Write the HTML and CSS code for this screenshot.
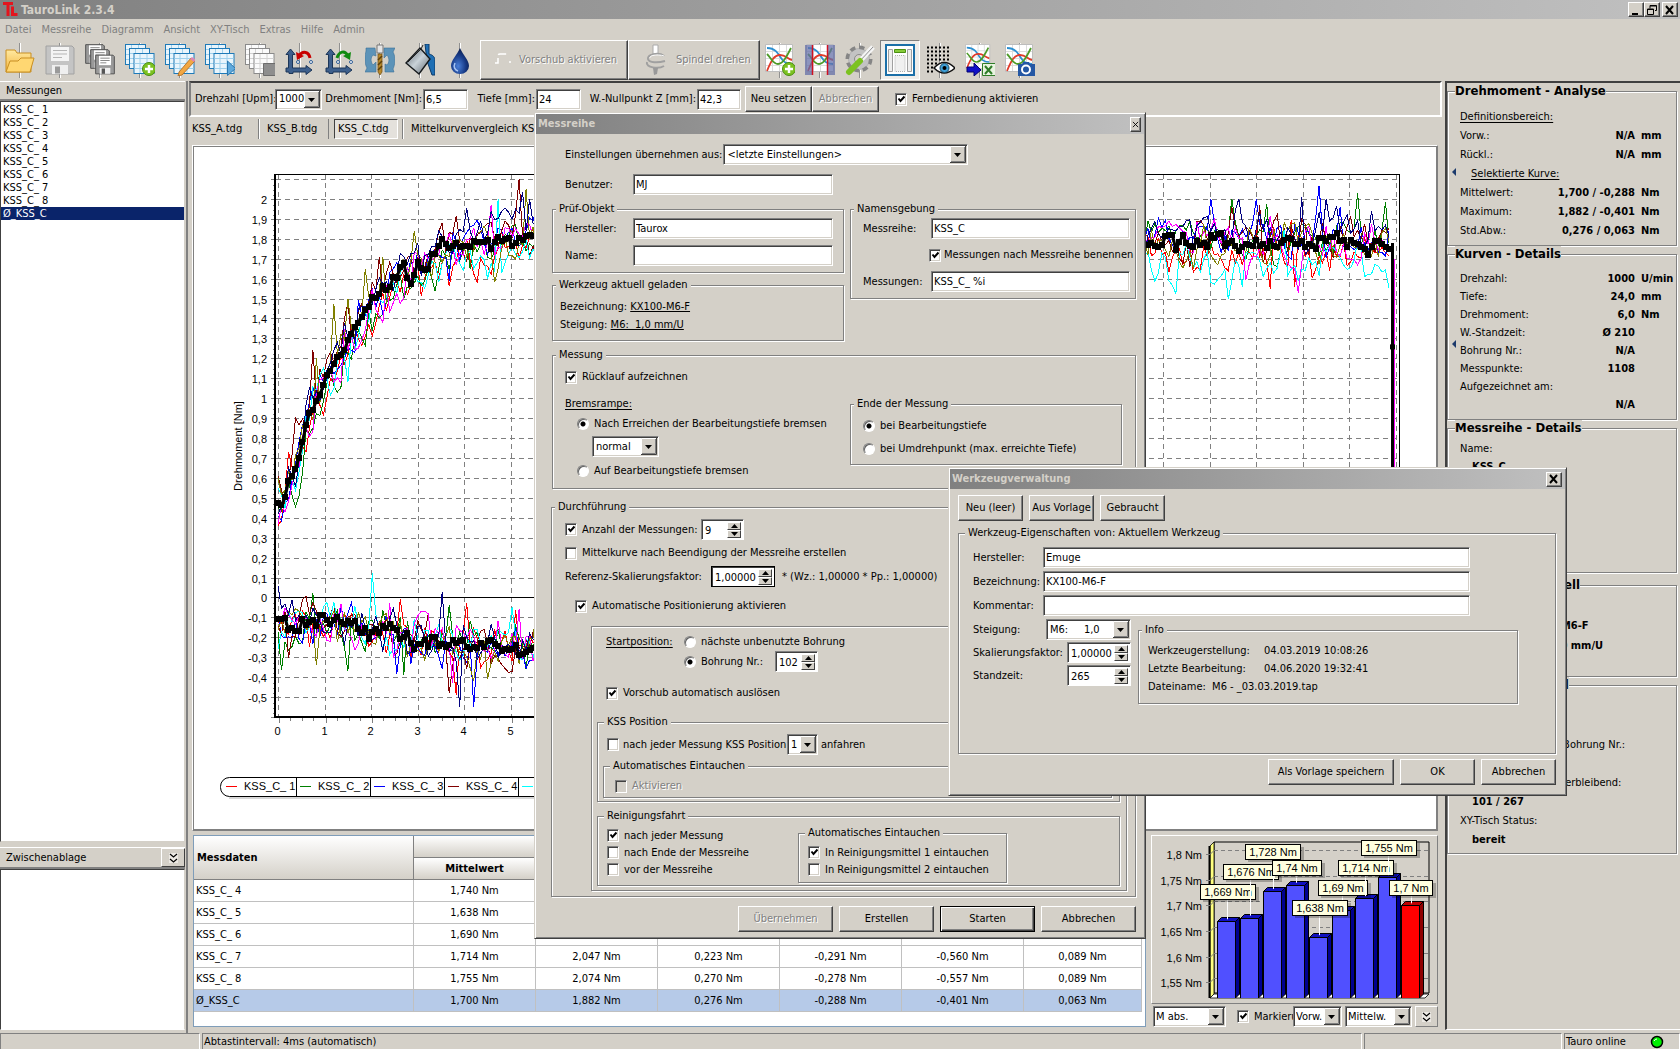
FILE: index.html
```html
<!DOCTYPE html>
<html lang="de">
<head>
<meta charset="utf-8">
<title>TauroLink 2.3.4</title>
<link rel="stylesheet" href="styles.css">
</head>
<body>
<svg class="defs" aria-hidden="true">
  <defs>
    <linearGradient id="gFolder" x1="0" y1="0" x2="0" y2="1"><stop offset="0" stop-color="#ffe9a0"/><stop offset="1" stop-color="#f2b33c"/></linearGradient>
    <linearGradient id="gBucket" x1="0" y1="0" x2="1" y2="1"><stop offset="0" stop-color="#555e66"/><stop offset=".5" stop-color="#c9d2d8"/><stop offset="1" stop-color="#59636b"/></linearGradient>
    <radialGradient id="gDrop" cx=".4" cy=".7" r=".7"><stop offset="0" stop-color="#4a7fd8"/><stop offset=".6" stop-color="#173a86"/><stop offset="1" stop-color="#0a1c4c"/></radialGradient>
    <symbol id="sheet" viewBox="0 0 21 21"><rect x=".5" y=".5" width="20" height="20" fill="#e9f5fc" stroke="#1e7ab8"/><path d="M1 5.500h19M1 10.500h19M1 15.500h19M6.500 1v19M13.500 1v19" stroke="#9fd0ec" fill="none"/></symbol>
    <symbol id="sheetGray" viewBox="0 0 21 21"><rect x=".5" y=".5" width="20" height="20" fill="#fbfbfb" stroke="#8a8a8a"/><path d="M1 5.500h19M1 10.500h19M1 15.500h19M6.500 1v19M13.500 1v19" stroke="#d2d2d2" fill="none"/></symbol>
    <symbol id="sheets" viewBox="0 0 30 32"><use href="#sheet" x="0" y="0" width="21" height="21"/><use href="#sheet" x="4" y="4" width="21" height="21"/><use href="#sheet" x="8" y="9" width="22" height="21"/></symbol>
    <symbol id="disk" viewBox="0 0 30 30"><path d="M1 1h26l2 2v26H1z" fill="#c4c4c4" stroke="#a2a2a2"/><path d="M6 2h18v14H6z" fill="#f4f4f4"/><path d="M8 5.500h14M8 9h14M8 12.500h9" stroke="#b5b5b5"/><path d="M7 20h16v9H7z" fill="#efefef"/><path d="M10 21.500h5v7h-5z" fill="#9a9a9a"/></symbol>
    <symbol id="diskDark" viewBox="0 0 30 30"><path d="M1 1h26l2 2v26H1z" fill="#9a9a9a" stroke="#555" stroke-width="1.500"/><path d="M6 2h18v14H6z" fill="#fff"/><path d="M8 5.500h14M8 9h14M8 12.500h9" stroke="#8a8a8a" stroke-width="1.500"/><path d="M7 20h16v9H7z" fill="#eee"/><path d="M10 21h5v8h-5z" fill="#555"/></symbol>
    <symbol id="curves" viewBox="0 0 30 30"><path d="M.5.500h27v27H.5z" fill="#fff" stroke="#bdbdbd"/><path d="M1 7.500h26M1 14.500h26M1 21.500h26M7.500 1v26M14.500 1v26M21.500 1v26" stroke="#dcdcdc"/><path d="M2 4c8 0 11 5 14 10s6 6 11 6" fill="none" stroke="#2c8fd0" stroke-width="1.800"/><path d="M2 27C6 17 9 11 15 11s7 4 12 5" fill="none" stroke="#e03b2a" stroke-width="1.800"/><path d="M2 10c5 5 6 10 11 10s9-8 13-16" fill="none" stroke="#4d9a27" stroke-width="1.800"/></symbol>
    <symbol id="plus" viewBox="0 0 14 14"><circle cx="7" cy="7" r="6.500" fill="#7cc220" stroke="#4a8c10"/><path d="M7 3v8M3 7h8" stroke="#fff" stroke-width="2.500"/></symbol>
    <symbol id="axes" viewBox="0 0 30 30"><path d="M5.500 4 10 9.500H7.500V23H21v-2.500L27 25l-6 4.500V27h-13v1.500h-4V27H1v-4h2.500V9.500H1z" fill="#3d5f8c" stroke="#1c3658"/></symbol>
    <symbol id="turn" viewBox="0 0 30 30"><path d="M10 3H1v3c-1 4-2 12 1 17l-2 4h11V17l-3 3c-3-4-2-8 0-10l3 1zM20 27h9l-1-3c2-4 3-12 0-17l2-4H19v10l3-3c3 4 2 8 0 10l-2-1z" fill="#5c93b8" stroke="#3a7098" stroke-width=".6"/><path d="M12 0h6v8h-6z" fill="#e4e4e4" stroke="#777"/><path d="M13 9h4v18l-2 3-2-3z" fill="#b98a2c" stroke="#6d4c10" stroke-width=".7"/><path d="m13 15 4-4m-4 9 4-4m-4 9 4-4" stroke="#5c3e0a" stroke-width="1.500"/></symbol>
    <symbol id="chevrons" viewBox="0 0 9 10"><path d="m1 1 3.500 3L8 1M1 6l3.500 3L8 6" fill="none" stroke="#000" stroke-width="1.200"/></symbol>
  </defs>
</svg>

<div class="app">
  <header class="titlebar">
    <svg class="logo" viewBox="0 0 15 15"><path d="M0 0h10v3H6.500v11h-3V3H0z" fill="#e3141d"/><path d="M8 4.500h3V11h3.500v3H8z" fill="#e3141d"/></svg>
    <h1>TauroLink 2.3.4</h1>
    <button class="wbtn" aria-label="Minimieren"><svg viewBox="0 0 12 12"><path d="M2 9h6v2H2z"/></svg></button>
    <button class="wbtn" aria-label="Wiederherstellen"><svg viewBox="0 0 12 12"><path d="M4 1.500h6.500v5H9M4 1.500v3M4 2h6.500M1.500 5h6v5.500h-6zM1.500 5.500h6" fill="none" stroke="#000"/></svg></button>
    <button class="wbtn wclose" aria-label="Schließen"><svg viewBox="0 0 12 12"><path d="m2 2 7 8M9 2l-7 8" stroke="#000" stroke-width="2"/></svg></button>
  </header>

  <nav class="menu">
    <a href="#">Datei</a><a href="#">Messreihe</a><a href="#">Diagramm</a><a href="#">Ansicht</a><a href="#">XY-Tisch</a><a href="#">Extras</a><a href="#">Hilfe</a><a href="#">Admin</a>
  </nav>

  <div class="toolbar">
    <button class="tool" aria-label="Öffnen"><svg viewBox="0 0 30 32"><path d="M1 6h9l2 3h14v19H1z" fill="url(#gFolder)" stroke="#c98f22"/><path d="m1 28 4-11h8l3-3h13l-4 14z" fill="#ffd772" stroke="#c98f22"/></svg></button>
    <button class="tool" aria-label="Speichern"><svg viewBox="0 0 30 32"><use href="#disk" x="0" y="1" width="30" height="30"/></svg></button>
    <button class="tool" aria-label="Alle speichern"><svg viewBox="0 0 30 32"><use href="#diskDark" x="0" y="0" width="20" height="20"/><use href="#diskDark" x="5" y="5" width="20" height="20"/><use href="#diskDark" x="10" y="10" width="20" height="21"/></svg></button>
    <button class="tool" aria-label="Neue Messreihe"><svg viewBox="0 0 30 32"><use href="#sheets" width="30" height="32"/><use href="#plus" x="17" y="18" width="14" height="14"/></svg></button>
    <button class="tool" aria-label="Messreihe bearbeiten"><svg viewBox="0 0 30 32"><use href="#sheets" width="30" height="32"/><path d="M26 14l4 3-13 14-4 1 1-4z" fill="#f2a742" stroke="#a8651a" stroke-width=".8"/><path d="m25 15 2-2 4 3-2 2z" fill="#dc86b4"/></svg></button>
    <button class="tool" aria-label="Messreihe starten"><svg viewBox="0 0 30 32"><use href="#sheets" width="30" height="32"/><path d="m22.500 17 8 7.500-8 7z" fill="#5fa9dc" stroke="#2b78b0"/></svg></button>
    <button class="tool" aria-label="Messreihe stoppen"><svg viewBox="0 0 30 32"><use href="#sheetGray" width="21" height="21"/><use href="#sheetGray" x="4" y="4" width="21" height="21"/><use href="#sheetGray" x="8" y="9" width="22" height="21"/><path d="M18.500 19.500h12v12h-12z" fill="#8e8e8e" stroke="#6c6c6c"/></svg></button>
    <button class="tool" aria-label="Achsen zurück"><svg viewBox="0 0 30 32"><use href="#axes" x="0" y="1" width="30" height="30"/><path d="M14 12c4-6 10-4 11 2" fill="none" stroke="#c80000" stroke-width="3"/><path d="m11 8 1 8 7-4z" fill="#c80000"/><circle cx="13" cy="18" r="1.500" fill="#fff" stroke="#2c5c94"/><circle cx="26" cy="18" r="1.500" fill="#fff" stroke="#2c5c94"/></svg></button>
    <button class="tool" aria-label="Achsen vor"><svg viewBox="0 0 30 32"><use href="#axes" x="0" y="1" width="30" height="30"/><path d="M12 14c2-7 8-8 11-2" fill="none" stroke="#108a10" stroke-width="3"/><path d="m26 8-1 8-7-4z" fill="#108a10"/><circle cx="13" cy="18" r="1.500" fill="#fff" stroke="#2c5c94"/><circle cx="26" cy="18" r="1.500" fill="#fff" stroke="#2c5c94"/></svg></button>
    <button class="tool" aria-label="Werkzeug wechseln"><svg viewBox="0 0 30 32"><use href="#turn" y="0" width="30" height="32"/></svg></button>
    <button class="tool" aria-label="Kühlschmierstoff"><svg viewBox="0 0 30 32"><path d="M20 0h4v10c4 1 6 3 6 7v14h-3l-5-14z" fill="#1f6fb4" stroke="#0c3a68"/><path d="m1 19 14-15 10 11-11 15z" fill="url(#gBucket)" stroke="#15191c" stroke-width="1.400"/><path d="M3 18 16 5l2-4" fill="none" stroke="#222"/></svg></button>
    <button class="tool" aria-label="Tropfen"><svg viewBox="0 0 30 32"><path d="M15 4c3 7 9 12 9 18a9 8 0 0 1-18 0C6 16 12 11 15 4z" fill="url(#gDrop)"/><path d="M10 19c-2 4 0 7 3 8" fill="none" stroke="#a9c6f4" stroke-width="1.500"/></svg></button>
    <button class="bigtool b1" disabled><svg viewBox="0 0 24 32"><path d="M3 19h3V12q0-2 2-2h8M17 18h2" fill="none" stroke="#fff" stroke-width="1.500" stroke-dasharray="8 3"/></svg>Vorschub aktivieren</button>
    <button class="bigtool b2" disabled><svg viewBox="0 0 24 32"><path d="M9 1h5v9H9z" fill="#fff" stroke="#aaa"/><path d="M20 12c-5-4-17-2-16 3 1 4 10 4 17 2M3 18c-2 6 12 7 17 4" fill="none" stroke="#a0a0a0" stroke-width="2"/><path d="M20 12c-5-2-15-1-14 2" fill="none" stroke="#fff"/><path d="M9 24h5l-1 6-3 1z" fill="#999"/></svg>Spindel drehen</button>
    <button class="tool" aria-label="Kurve hinzufügen"><svg viewBox="0 0 30 32"><use href="#curves" width="30" height="30"/><use href="#plus" x="17" y="18" width="14" height="14"/></svg></button>
    <button class="tool" aria-label="Bereich"><svg viewBox="0 0 30 32"><use href="#curves" x="1" width="30" height="30"/><path d="M0 1h7v30H0zM23 1h7v30h-7z" fill="#6670a8" fill-opacity=".75"/><path d="M7.500 1v30M22.500 1v30" stroke="#d01020" stroke-width="1.500"/></svg></button>
    <button class="tool" aria-label="Einstellungen"><svg viewBox="0 0 30 32"><circle cx="14" cy="15" r="11" fill="#b6b6b6" stroke="#858585" stroke-dasharray="5 3.600" stroke-width="5"/><circle cx="14" cy="15" r="10" fill="#c3c3c3"/><circle cx="14" cy="15" r="4.500" fill="#d4d0c8" stroke="#8a8a8a"/><path d="M28 3 14 18" stroke="#f4f4f4" stroke-width="5"/><path d="M28 3 14 18" stroke="#909090"/><path d="M15 17 4 28" stroke="#7cc220" stroke-width="6" stroke-linecap="round"/></svg></button>
    <button class="tool pressed" aria-label="Seitenleisten"><svg viewBox="0 0 30 32"><path d="M1 1h28v30H1z" fill="#fff" stroke="#1b6fa8" stroke-width="2"/><path d="M3.500 5.500h4v22h-4zM22.500 5.500h4v22h-4z" fill="#eee" stroke="#a0a0a0"/><path d="M10 11.500h10v16H10z" fill="#f0f0f0" stroke="#b0b0b0" stroke-dasharray="1 1"/><path d="M9.500 5.500h11v3h-11z" fill="#86cc3a" stroke="#4b8f12"/></svg></button>
    <button class="tool" aria-label="Raster"><svg viewBox="0 0 30 32"><path d="M2 3.500h24M2 7.500h24M2 11.500h24M2 15.500h24M2 19.500h10M2 23.500h8M2 27.500h8" stroke="#000" stroke-width="2" stroke-dasharray="2 2"/><path d="M9 24q10-11 21 0-11 10-21 0z" fill="#fff" stroke="#111" stroke-width="1.500"/><circle cx="19.500" cy="24" r="4.500" fill="#3fa0d8" stroke="#17465f"/><circle cx="19.500" cy="24" r="2"/></svg></button>
    <button class="tool" aria-label="Excel-Export"><svg viewBox="0 0 30 32"><use href="#curves" width="27" height="27"/><path d="M2 23h7v-4l7 7-7 6v-4H2z" fill="#1010c8" stroke="#000070"/><path d="M17.500 19.500h13v12h-13z" fill="#e8f4e0" stroke="#2f7d28"/><path d="m20 22 7 8m0-8-7 8" stroke="#2f7d28" stroke-width="2"/></svg></button>
    <button class="tool" aria-label="Bildschirmfoto"><svg viewBox="0 0 30 32"><use href="#curves" width="30" height="30"/><path d="M13 20h4l1-2h6l1 2h5v12H13z" fill="#2457a4"/><circle cx="21" cy="25.500" r="4" fill="#2457a4" stroke="#fff" stroke-width="2"/></svg></button>
  </div>

  <main class="main">
    <aside class="left">
      <h2 class="lhead">Messungen</h2>
      <ul class="runs">
        <li>KSS_C_ 1</li><li>KSS_C_ 2</li><li>KSS_C_ 3</li><li>KSS_C_ 4</li><li>KSS_C_ 5</li><li>KSS_C_ 6</li><li>KSS_C_ 7</li><li>KSS_C_ 8</li><li class="sel">Ø_KSS_C</li>
      </ul>
      <h2 class="lhead clip">Zwischenablage<button class="mini" aria-label="Ausklappen"><svg viewBox="0 0 9 10"><use href="#chevrons"/></svg></button></h2>
      <div class="clipbox"></div>
    </aside>

    <section class="center">
      <div class="remote">
        <label for="rpm">Drehzahl [Upm]:</label><select id="rpm"><option>1000</option></select>
        <label for="trq">Drehmoment [Nm]:</label><input id="trq" value="6,5">
        <label for="dep">Tiefe [mm]:</label><input id="dep" value="24">
        <label for="zero">W.-Nullpunkt Z [mm]:</label><input id="zero" value="42,3">
        <span class="pair"><button class="btn">Neu setzen</button><button class="btn" disabled>Abbrechen</button></span>
        <label class="check"><input type="checkbox" checked>Fernbedienung aktivieren</label>
      </div>
      <div class="tabs">
        <button>KSS_A.tdg</button><button>KSS_B.tdg</button><button class="on">KSS_C.tdg</button><button>Mittelkurvenvergleich KSS</button>
      </div>
      <div class="chart"><svg id="plot" role="img" aria-label="Drehmoment über Tiefe"></svg></div>
      <div class="bottom">
        <div class="tablewrap">
          <table>
            <colgroup><col class="c0"><col class="cv"><col class="cv"><col class="cv"><col class="cv"><col class="cv"><col></colgroup>
            <thead>
              <tr><th rowspan="2" class="first">Messdaten</th><th colspan="6"></th></tr>
              <tr><th>Mittelwert</th><th></th><th></th><th></th><th></th><th></th></tr>
            </thead>
            <tbody>
              <tr><td>KSS_C_ 4</td><td>1,740 Nm</td><td></td><td></td><td></td><td></td><td></td></tr>
              <tr><td>KSS_C_ 5</td><td>1,638 Nm</td><td></td><td></td><td></td><td></td><td></td></tr>
              <tr><td>KSS_C_ 6</td><td>1,690 Nm</td><td></td><td></td><td></td><td></td><td></td></tr>
              <tr><td>KSS_C_ 7</td><td>1,714 Nm</td><td>2,047 Nm</td><td>0,223 Nm</td><td>-0,291 Nm</td><td>-0,560 Nm</td><td>0,089 Nm</td></tr>
              <tr><td>KSS_C_ 8</td><td>1,755 Nm</td><td>2,074 Nm</td><td>0,270 Nm</td><td>-0,278 Nm</td><td>-0,557 Nm</td><td>0,089 Nm</td></tr>
              <tr class="mean"><td>Ø_KSS_C</td><td>1,700 Nm</td><td>1,882 Nm</td><td>0,276 Nm</td><td>-0,288 Nm</td><td>-0,401 Nm</td><td>0,063 Nm</td></tr>
            </tbody>
          </table>
        </div>
        <div class="barcol">
          <div class="barpanel"><svg id="bars" viewBox="0 0 285 167" role="img" aria-label="Mittelwerte"></svg></div>
          <div class="barctl">
            <select class="w73" aria-label="Größe"><option>M abs.</option></select>
            <label class="check mark"><input type="checkbox" checked>Markieru</label>
            <select class="w49" aria-label="Richtung"><option>Vorw.</option></select>
            <select class="w67" aria-label="Kennwert"><option>Mittelw.</option></select>
            <button class="mini flat" aria-label="Mehr"><svg viewBox="0 0 9 10"><use href="#chevrons"/></svg></button>
          </div>
        </div>
      </div>
    </section>

    <aside class="right">
      <fieldset class="info g1"><legend>Drehmoment - Analyse</legend>
        <p class="u">Definitionsbereich:</p>
        <p>Vorw.:<b>N/A</b><i>mm</i></p>
        <p>Rückl.:<b>N/A</b><i>mm</i></p>
        <p class="u sub">Selektierte Kurve:</p>
        <p>Mittelwert:<b>1,700 / -0,288</b><i>Nm</i></p>
        <p>Maximum:<b>1,882 / -0,401</b><i>Nm</i></p>
        <p>Std.Abw.:<b>0,276 / 0,063</b><i>Nm</i></p>
      </fieldset>
      <fieldset class="info g2"><legend>Kurven - Details</legend>
        <p>Drehzahl:<b>1000</b><i>U/min</i></p>
        <p>Tiefe:<b>24,0</b><i>mm</i></p>
        <p>Drehmoment:<b>6,0</b><i>Nm</i></p>
        <p>W.-Standzeit:<b>Ø 210</b><i></i></p>
        <p>Bohrung Nr.:<b>N/A</b><i></i></p>
        <p>Messpunkte:<b>1108</b><i></i></p>
        <p>Aufgezeichnet am:</p>
        <p><b>N/A</b><i></i></p>
      </fieldset>
      <fieldset class="info g3"><legend>Messreihe - Details</legend>
        <p>Name:</p>
        <p class="val">KSS_C</p>
      </fieldset>
      <fieldset class="info g4"><legend>Werkzeug - Aktuell</legend>
        <p class="val">Emuge - KX100-M6-F</p>
        <p class="val">Steigung M6: 1,0 mm/U</p>
      </fieldset>
      <fieldset class="info g5"><legend>Bohrplatte Detail</legend>
        <p>Nächste unbenutzte Bohrung Nr.:</p>
        <p></p>
        <p>Bohrungen – davon verbleibend:</p>
        <p class="val">101 / 267</p>
        <p>XY-Tisch Status:</p>
        <p class="val">bereit</p>
      </fieldset>
    </aside>
  </main>

  <footer class="status">
    <span></span><span>Abtastintervall: 4ms (automatisch)</span><span></span><span>Tauro online<svg viewBox="0 0 14 14"><circle cx="7" cy="7" r="5.500" fill="#00f000" stroke="#000" stroke-width="1.500"/><path d="M4 6q1-2 3-2" stroke="#fff" fill="none"/></svg></span>
  </footer>
</div>

<section class="window dlg1" role="dialog" aria-label="Messreihe">
  <header class="wtitle">Messreihe<button class="wbtn small" aria-label="Schließen"><svg viewBox="0 0 8 8"><path d="m1 1 6 6M7 1 1 7" stroke="#000"/></svg></button></header>
  <div class="body1">
    <div class="line top1"><label for="src">Einstellungen übernehmen aus:</label><select id="src"><option>&lt;letzte Einstellungen&gt;</option></select></div>
    <div class="line top2"><label for="usr">Benutzer:</label><input id="usr" value="MJ"></div>
    <div class="cols">
      <div class="colL">
        <fieldset class="box po"><legend>Prüf-Objekt</legend>
          <div class="line"><label for="mk">Hersteller:</label><input id="mk" value="Taurox"></div>
          <div class="line"><label for="nm">Name:</label><input id="nm" value=""></div>
        </fieldset>
        <fieldset class="box wz"><legend>Werkzeug aktuell geladen</legend>
          <p>Bezeichnung: <u>KX100-M6-F</u></p>
          <p>Steigung: <u>M6:&nbsp; 1,0 mm/U</u></p>
        </fieldset>
      </div>
      <fieldset class="box ng"><legend>Namensgebung</legend>
        <div class="line"><label for="mr">Messreihe:</label><input id="mr" value="KSS_C"></div>
        <label class="check h32"><input type="checkbox" checked>Messungen nach Messreihe benennen</label>
        <div class="line"><label for="ms">Messungen:</label><input id="ms" value="KSS_C_ %i"></div>
      </fieldset>
    </div>

    <fieldset class="box me"><legend>Messung</legend>
      <div class="meL">
        <label class="check h18"><input type="checkbox" checked>Rücklauf aufzeichnen</label>
        <p class="u brems">Bremsrampe:</p>
        <label class="check h18 in12"><input type="radio" name="br" checked>Nach Erreichen der Bearbeitungstiefe bremsen</label>
        <select class="ramp" aria-label="Bremsrampe"><option>normal</option></select>
        <label class="check h18 in12"><input type="radio" name="br">Auf Bearbeitungstiefe bremsen</label>
      </div>
      <fieldset class="box ende"><legend>Ende der Messung</legend>
        <label class="check h18"><input type="radio" name="en" checked>bei Bearbeitungstiefe</label>
        <label class="check h18"><input type="radio" name="en">bei Umdrehpunkt (max. erreichte Tiefe)</label>
      </fieldset>
    </fieldset>

    <fieldset class="box df"><legend>Durchführung</legend>
      <div class="line"><label class="check anz"><input type="checkbox" checked>Anzahl der Messungen:</label><span class="spin w42"><input value="9" aria-label="Anzahl"><button class="up" aria-label="Mehr"></button><button class="dn" aria-label="Weniger"></button></span></div>
      <label class="check h18 mk"><input type="checkbox">Mittelkurve nach Beendigung der Messreihe erstellen</label>
      <div class="line ref"><label for="rf">Referenz-Skalierungsfaktor:</label><span class="spin w64 focus"><input id="rf" value="1,00000"><button class="up" aria-label="Mehr"></button><button class="dn" aria-label="Weniger"></button></span><span>* (Wz.: 1,00000 * Pp.: 1,00000)</span></div>
      <label class="check h18 auto"><input type="checkbox" checked>Automatische Positionierung aktivieren</label>
      <div class="pos">
        <div class="start">
          <span class="u">Startposition:</span>
          <label class="check"><input type="radio" name="st">nächste unbenutzte Bohrung</label>
          <label class="check bn"><input type="radio" name="st" checked>Bohrung Nr.:</label>
          <span class="spin w42"><input value="102" aria-label="Bohrung Nr."><button class="up" aria-label="Mehr"></button><button class="dn" aria-label="Weniger"></button></span>
        </div>
        <label class="check h18 vs"><input type="checkbox" checked>Vorschub automatisch auslösen</label>
        <fieldset class="box kss"><legend>KSS Position</legend>
          <div class="line"><label class="check"><input type="checkbox">nach jeder Messung KSS Position</label><select aria-label="KSS Position"><option>1</option></select><span>anfahren</span></div>
          <fieldset class="box ae"><legend>Automatisches Eintauchen</legend>
            <label class="check h18 off"><input type="checkbox" disabled>Aktivieren</label>
          </fieldset>
        </fieldset>
        <fieldset class="box rf"><legend>Reinigungsfahrt</legend>
          <div class="stack">
            <label class="check"><input type="checkbox" checked>nach jeder Messung</label>
            <label class="check"><input type="checkbox">nach Ende der Messreihe</label>
            <label class="check"><input type="checkbox">vor der Messreihe</label>
          </div>
          <fieldset class="box ae2"><legend>Automatisches Eintauchen</legend>
            <label class="check"><input type="checkbox" checked>In Reinigungsmittel 1 eintauchen</label>
            <label class="check"><input type="checkbox">In Reinigungsmittel 2 eintauchen</label>
          </fieldset>
        </fieldset>
      </div>
    </fieldset>
    <div class="foot1"><button class="btn" disabled>Übernehmen</button><button class="btn">Erstellen</button><button class="btn def">Starten</button><button class="btn">Abbrechen</button></div>
  </div>
</section>

<section class="window dlg2" role="dialog" aria-label="Werkzeugverwaltung">
  <header class="wtitle">Werkzeugverwaltung<button class="wbtn" aria-label="Schließen"><svg viewBox="0 0 12 12"><path d="m2 2 7 8M9 2l-7 8" stroke="#000" stroke-width="2"/></svg></button></header>
  <div class="body2">
    <div class="bar2"><button class="btn">Neu (leer)</button><button class="btn">Aus Vorlage</button><button class="btn">Gebraucht</button></div>
    <fieldset class="box props"><legend>Werkzeug-Eigenschaften von: Aktuellem Werkzeug</legend>
      <div class="line wide"><label for="t1">Hersteller:</label><input id="t1" value="Emuge"></div>
      <div class="line wide"><label for="t2">Bezeichnung:</label><input id="t2" value="KX100-M6-F"></div>
      <div class="line wide"><label for="t3">Kommentar:</label><input id="t3" value=""></div>
      <div class="lower">
        <div class="nums">
          <div class="line"><label for="t4">Steigung:</label><select id="t4"><option>M6:&nbsp;&nbsp;&nbsp;&nbsp; 1,0</option></select></div>
          <div class="line"><label for="t5">Skalierungsfaktor:</label><span class="spin w64"><input id="t5" value="1,00000"><button class="up" aria-label="Mehr"></button><button class="dn" aria-label="Weniger"></button></span></div>
          <div class="line"><label for="t6">Standzeit:</label><span class="spin w64"><input id="t6" value="265"><button class="up" aria-label="Mehr"></button><button class="dn" aria-label="Weniger"></button></span></div>
        </div>
        <fieldset class="box inf"><legend>Info</legend>
          <p><span>Werkzeugerstellung:</span>04.03.2019 10:08:26</p>
          <p><span>Letzte Bearbeitung:</span>04.06.2020 19:32:41</p>
          <p>Dateiname:&nbsp; M6 - _03.03.2019.tap</p>
        </fieldset>
      </div>
    </fieldset>
    <div class="foot2"><button class="btn big">Als Vorlage speichern</button><button class="btn">OK</button><button class="btn">Abbrechen</button></div>
  </div>
</section>
<script src="charts.js"></script>
</body>
</html>
```
FILE: styles.css
```css
* { box-sizing: border-box; }
body {
  margin: 0;
  background: #d4d0c8;
  color: #000;
  font: 11px/14px "DejaVu Sans Condensed", "DejaVu Sans", sans-serif;
  overflow: hidden;
}
.defs { position: absolute; width: 0; height: 0; }
h1, h2, p, ul, fieldset { margin: 0; padding: 0; }
ul { list-style: none; }
button, input, select { font: inherit; color: inherit; margin: 0; border-radius: 0; }
label, p, legend, th, td, li, a, span, button { white-space: nowrap; }

/* shared controls */
input:not([type]), select {
  appearance: none;
  height: 21px;
  padding: 0 2px;
  border: 1px solid;
  border-color: #808080 #fff #fff #808080;
  box-shadow: inset 1px 1px #404040, inset -1px -1px #d4d0c8;
  background: #fff;
  outline: 0;
  min-width: 0;
}
select {
  padding-left: 3px;
  background: #fff url("data:image/svg+xml,%3Csvg xmlns='http://www.w3.org/2000/svg' width='16' height='17'%3E%3Cpath fill='%23d4d0c8' d='M0 0h16v17H0z'/%3E%3Cpath d='M.5 16V.5H15' fill='none' stroke='%23fff'/%3E%3Cpath d='M0 16.500h15.500V0' fill='none' stroke='%23404040'/%3E%3Cpath d='M1 15.500h13.500V1' fill='none' stroke='%23808080'/%3E%3Cpath d='M4 7h7l-3.500 4z'/%3E%3C/svg%3E") no-repeat right 1px top 1px;
}
.btn {
  height: 26px;
  padding: 0;
  background: #d4d0c8;
  border: 1px solid;
  border-color: #fff #404040 #404040 #fff;
  box-shadow: inset -1px -1px #808080;
  text-align: center;
}
.btn:disabled, .off { color: #808080; text-shadow: 1px 1px #fff; }
.btn.def { border-color: #000; box-shadow: inset 1px 1px #fff, inset -1px -1px #404040, inset -2px -2px #808080; }
.check { display: flex; align-items: center; gap: 5px; }
.check input {
  appearance: none;
  flex: none;
  width: 12px;
  height: 13px;
  border: 1px solid;
  border-color: #808080 #fff #fff #808080;
  box-shadow: inset 1px 1px #404040, inset -1px -1px #d4d0c8;
  background: #fff;
}
.check input[type=checkbox]:checked {
  background: #fff url("data:image/svg+xml,%3Csvg xmlns='http://www.w3.org/2000/svg' width='10' height='11'%3E%3Cpath d='M2.500 4.500 4.500 7l4-4.500' fill='none' stroke='%23000' stroke-width='2'/%3E%3C/svg%3E") no-repeat;
}
.check input:disabled { background: #d4d0c8; }
.check input[type=radio] { border-radius: 50%; height: 12px; box-shadow: inset 1px 1px #606060; }
.check input[type=radio]:checked { background: radial-gradient(circle at 5px 5px, #000 2px, #fff 3px); }
.spin {
  display: grid;
  grid-template: 8px 8px / 1fr 14px;
  height: 21px;
  padding: 2px;
  border: 1px solid;
  border-color: #808080 #fff #fff #808080;
  box-shadow: inset 1px 1px #404040;
  background: #fff;
}
.spin input:not([type]) { grid-row: 1 / 3; height: 17px; width: 100%; border: 0; box-shadow: none; padding: 0 0 0 1px; background: none; }
.spin button {
  padding: 0;
  border: 1px solid;
  border-color: #fff #404040 #404040 #fff;
  background: #d4d0c8 url("data:image/svg+xml,%3Csvg xmlns='http://www.w3.org/2000/svg' width='7' height='4'%3E%3Cpath d='M0 4h7L3.500 0z'/%3E%3C/svg%3E") no-repeat center;
}
.spin .dn { background-image: url("data:image/svg+xml,%3Csvg xmlns='http://www.w3.org/2000/svg' width='7' height='4'%3E%3Cpath d='M0 0h7L3.500 4z'/%3E%3C/svg%3E"); }
.spin.focus { border-color: #000; }
.w42 { width: 43px; }
.w64 { width: 64px; }
.line { display: flex; align-items: center; }
.u { text-decoration: underline; text-underline-offset: 2px; }
.h18 { height: 18px; }
.h32 { height: 32px; }
.box {
  --inset: 12px;
  --legend: 3px;
  position: relative;
  border: 1px solid #808080;
  box-shadow: 1px 1px #fff, inset 1px 1px #fff;
  min-width: 0;
}
.box > legend { margin-left: calc(var(--legend) - var(--inset)); padding: 0 3px; background: #d4d0c8; }

/* main window */
.app { display: flex; flex-direction: column; height: 100vh; }
.titlebar {
  display: flex;
  align-items: center;
  height: 19px;
  padding: 0 2px 0 3px;
  background: linear-gradient(90deg, #808080, #c0c0c0);
}
.logo { width: 15px; height: 15px; }
h1 { flex: 1; padding-left: 3px; font-size: 12px; line-height: 18px; color: #d4d0c8; }
.wbtn {
  width: 16px;
  height: 15px;
  padding: 0;
  display: grid;
  place-items: center;
  background: #d4d0c8;
  border: 1px solid;
  border-color: #fff #404040 #404040 #fff;
  box-shadow: inset -1px -1px #808080;
}
.wbtn svg { width: 12px; height: 12px; }
.wclose { margin-left: 2px; }
.menu { display: flex; gap: 10px; height: 21px; padding-left: 5px; align-items: center; }
.menu a { color: #808080; text-decoration: none; }
.toolbar { display: flex; height: 41px; padding-bottom: 1px; }
.tool {
  flex: none;
  width: 40px;
  padding: 0;
  border: 0;
  display: grid;
  place-items: center;
  background: linear-gradient(90deg, transparent 19px, #909090 19px, #909090 20px, #fff 20px, #fff 21px, transparent 21px) no-repeat 0 3px / 40px 35px;
}
.tool svg { width: 30px; height: 32px; }
.tool.pressed {
  border: 1px solid;
  border-color: #808080 #fff #fff #808080;
  background: #efedea;
}
.bigtool {
  display: flex;
  align-items: center;
  padding: 0;
  background: #d4d0c8;
  border: 1px solid;
  border-color: #fff #404040 #404040 #fff;
  box-shadow: inset -1px -1px #808080;
  color: #808080;
  text-shadow: 1px 1px #fff;
}
.bigtool svg { width: 24px; height: 32px; }
.b1 { width: 148px; padding-left: 11px; gap: 3px; }
.b2 { width: 132px; padding-left: 15px; gap: 8px; }
.main { flex: 1; min-height: 0; display: grid; grid-template-columns: 188px minmax(0, 1fr) 235px; }

/* left column */
.left { display: flex; flex-direction: column; border-right: 2px solid #808080; padding-right: 1px; }
.lhead {
  display: flex;
  align-items: center;
  justify-content: space-between;
  height: 20px;
  padding-left: 6px;
  font-size: 11px;
  font-weight: normal;
  border-top: 1px solid #fff;
  border-bottom: 2px solid #808080;
  flex: none;
}
.runs { flex: 1; background: #fff; border: 1px solid #404040; border-right-color: #d4d0c8; border-bottom-color: #d4d0c8; padding-top: 1px; }
.runs li { height: 13px; line-height: 13px; padding-left: 2px; }
.runs .sel { background: #0a246a; color: #fff; }
.clip { margin-top: 5px; height: 22px; }
.mini {
  width: 24px;
  height: 19px;
  display: grid;
  place-items: center;
  padding: 0;
  background: #d4d0c8;
  border: 1px solid;
  border-color: #fff #404040 #404040 #fff;
}
.mini svg { width: 9px; height: 10px; background: #ece9e4; }
.clipbox { height: 161px; background: #fff; border: 1px solid #404040; border-right-color: #d4d0c8; border-bottom-color: #fff; margin-bottom: 3px; }

/* centre column */
.center { display: flex; flex-direction: column; padding: 0 7px 3px 1px; min-width: 0; }
.remote {
  display: grid;
  grid-template-columns: 80px 47px 101px 45px 68px 45px 116px 44px 138px auto;
  align-items: center;
  height: 36px;
  padding-left: 4px;
  border: 2px solid #808080;
  border-top-color: #404040;
  border-right-color: #fff;
  border-bottom-color: #fff;
  margin-right: -4px;
}
.remote > label { text-align: right; padding-right: 1px; }
.pair { display: flex; margin-left: 4px; margin-bottom: 1px; }
.pair .btn { width: 69px; }
.remote .check { margin-left: 16px; justify-content: start; }
.tabs { display: flex; align-items: center; height: 28px; padding: 1px 0 5px; }
.tabs button { height: 20px; padding: 0 7px 0 7px; border: 0; background: none; border-left: 1px solid #fff; box-shadow: -1px 0 #808080; text-align: left; overflow: hidden; }
.tabs button:first-child { width: 70px; border: 0; box-shadow: none; padding-left: 3px; }
.tabs button:nth-child(2) { width: 71px; }
.tabs .on { width: 64px; margin: 0 5px 0 4px; padding: 0 3px; border: 1px solid; border-color: #404040 #fff #fff #404040; background: #e4e1dc; box-shadow: -5px 0 #d4d0c8, -6px 0 #808080; }
.chart {
  flex: 1;
  min-height: 0;
  margin-left: 3px;
  background: #fff;
  border: 1px solid;
  border-color: #fff #808080 #808080 #fff;
  box-shadow: inset 1px 1px #808080, inset -1px -1px #808080;
}
.chart svg { display: block; width: 100%; height: 100%; }
svg text { font: 11px "Liberation Sans", Arial, sans-serif; }
.bottom { display: flex; gap: 5px; height: 192px; margin: 4px 0 3px 4px; }
.tablewrap { flex: 1; min-width: 0; background: #fff; border: 1px solid #7f9db9; padding-right: 3px; overflow: hidden; }
table { width: 100%; border-collapse: separate; border-spacing: 0; table-layout: fixed; }
.c0 { width: 220px; }
.cv { width: 122px; }
th { height: 22px; padding: 0; background: linear-gradient(#fff, #d4d0c8); border-right: 1px solid #808080; border-bottom: 1px solid #808080; }
th.first { text-align: left; padding: 0 3px; font-size: 11px; }
td { height: 22px; padding: 0; border-right: 1px solid #c0c0c0; border-bottom: 1px solid #c0c0c0; text-align: center; }
td:first-child { text-align: left; padding-left: 2px; }
.mean td { background: #b6cae8; }
.barcol { width: 287px; display: flex; flex-direction: column; gap: 2px; }
.barpanel { height: 169px; border: 1px solid; border-color: #fff #808080 #808080 #fff; }
.barpanel svg { display: block; width: 285px; height: 167px; }
.barctl { display: flex; gap: 3px; padding-left: 2px; }
.barctl select { flex: none; padding-left: 2px; }
.w73 { width: 73px; }
.w49 { width: 49px; }
.w67 { width: 67px; }
.mark { width: 56px; margin: 0 -3px 0 8px; overflow: hidden; flex: none; }
.flat { border-color: #fff #808080 #808080 #fff; height: 21px; flex: 1; }

/* right column */
.right { border: 2px solid #808080; border-top-color: #404040; border-left-color: #404040; border-right: 0; border-bottom: 1px solid #fff; padding-right: 3px; margin-bottom: 3px; overflow: hidden; }
.info { border: 1px solid #808080; box-shadow: 1px 1px #fff, inset 1px 1px #fff; padding: 0 0 0 12px; min-width: 0; }
.info legend { margin-left: -5px; padding: 0; font: bold 13px/16px "DejaVu Sans Condensed", sans-serif; background: #d4d0c8; }
.info p { display: flex; height: 18px; align-items: center; }
.info b { flex: 1; text-align: right; }
.info i { width: 41px; padding-left: 6px; font-style: normal; font-weight: bold; }
.info .val { font-weight: bold; padding-left: 12px; }
.info .sub { padding-left: 11px; position: relative; }
.sub::before, .g2 p:nth-of-type(5)::before { content: ""; position: absolute; left: -8px; top: 4px; border: 4px solid transparent; border-right: 4px solid #1c3a6c; border-left: 0; }
.g2 p:nth-of-type(5) { position: relative; }
.g2 p:nth-of-type(5)::before { top: -2px; }
.g1 { padding-top: 8px; height: 163px; }
.g1 p { height: 19px; }
.g2 { padding-top: 8px; height: 174px; }
.g3 { padding-top: 4px; height: 153px; }
.g4 { height: 100px; padding-top: 23px; margin-top: 4px; }
.g4 .val { height: 20px; }
.g5 { height: 177px; padding-top: 42px; margin-top: 0; }
.g5 p { height: 19px; }

.status { display: grid; grid-template-columns: 200px 1fr 198px 116px; gap: 2px; height: 16px; }
.status span { display: flex; align-items: center; border: 1px solid #808080; border-right-color: #fff; border-bottom: 0; padding-left: 1px; }
.status svg { width: 14px; height: 14px; margin-left: 24px; }

/* floating dialogs */
.window { position: absolute; background: #d4d0c8; border: 1px solid; border-color: #d4d0c8 #404040 #404040 #d4d0c8; box-shadow: inset 1px 1px #fff, inset -1px -1px #808080; padding: 1px; }
.wtitle { display: flex; align-items: center; justify-content: space-between; height: 20px; padding: 0 3px 0 2px; background: linear-gradient(90deg, #808080, #c0c0c0); color: #d4d0c8; font-weight: bold; }
.small { width: 11px; }
.wbtn.small svg { width: 7px; height: 7px; }
.dlg1 { left: 534px; top: 112px; width: 612px; }
.body1 { padding: 10px 8px 5px 16px; }
.top1, .top2 { padding-left: 13px; }
.top1 { gap: 1px; margin-bottom: 9px; }
.top1 select { width: 245px; }
.top2 label { width: 68px; }
.top2 input { width: 200px; }
.cols { display: grid; grid-template-columns: 292px 286px; gap: 6px; margin-top: 7px; }
.po { padding: 2px 10px 6px 12px; }
.po .line + .line { margin-top: 6px; }
.po label { width: 68px; }
.po .line input { flex: 1; }
.wz { --inset: 7px; margin-top: 5px; padding: 6px 7px; }
.wz p { height: 18px; line-height: 18px; }
.ng { padding: 2px 5px 6px 12px; align-self: start; }
.ng .line label { width: 68px; }
.ng .line input { flex: 1; }
.ng .check { padding-left: 66px; gap: 3px; }
.me { display: flex; margin-top: 7px; padding: 6px 13px 8px 12px; }
.meL { width: 285px; }
.brems { margin: 11px 0 4px; }
.in12 { padding-left: 12px; }
.meL .check { gap: 5px; }
.ramp { display: block; width: 67px; margin: 3px 0 5px 27px; }
.ende { flex: 1; margin-top: 29px; padding: 6px 12px; height: 68px; }
.ende .check + .check { margin-top: 5px; }
.df { --inset: 13px; margin-top: 11px; margin-left: -1px; padding: 5px 8px 5px 13px; }
.df .anz { width: 136px; }
.mk { margin-top: 4px; }
.ref { margin-top: 4px; }
.ref label { width: 146px; }
.ref span:last-child { margin-left: 7px; }
.auto { margin: 10px 0 11px 10px; }
.pos { margin-left: 26px; padding: 6px 6px 4px 5px; border: 1px solid #808080; box-shadow: 1px 1px #fff, inset 1px 1px #fff; }
.start { display: grid; grid-template: 18px 21px / 78px 91px 1fr; padding-left: 9px; align-items: center; }
.start .check:nth-child(2) { grid-column: 2 / 4; }
.start .bn { grid-column: 2; }
.start .spin { grid-column: 3; }
.vs { margin: 12px 0 13px 9px; }
.kss { --inset: 5px; --legend: 6px; padding: 5px 7px 3px 5px; }
.kss .line { padding-left: 4px; gap: 3px; }
.kss .line .check { width: 177px; gap: 4px; }
.kss .line select { width: 31px; }
.ae { --inset: 11px; --legend: 6px; margin-top: 4px; padding: 4px 11px; height: 39px; }
.rf { --inset: 9px; --legend: 6px; display: flex; margin-top: 7px; padding: 4px 9px 2px; height: 77px; }
.stack { width: 191px; }
.stack .check, .ae2 .check { height: 17px; }
.ae2 { --inset: 9px; --legend: 6px; width: 209px; margin-top: -1px; padding: 4px 9px; height: 57px; }
.foot1 { display: flex; justify-content: flex-end; gap: 6px; margin-top: 9px; }
.foot1 .btn { width: 95px; }
.dlg2 { left: 948px; top: 467px; width: 619px; }
.body2 { padding: 6px 9px 9px 8px; }
.bar2 { display: flex; gap: 6px; margin-bottom: 5px; }
.bar2 .btn { width: 65px; }
.props { --inset: 14px; --legend: 6px; height: 228px; padding: 7px 12px 8px 14px; }
.wide { margin-bottom: 3px; }
.wide label { width: 70px; }
.wide input { width: 427px; }
.lower { display: flex; gap: 7px; }
.nums { width: 158px; }
.nums .line { justify-content: space-between; margin-bottom: 2px; }
.nums select { width: 85px; }
.inf { --inset: 9px; width: 380px; height: 81px; margin-top: 4px; padding: 5px 9px; }
.inf p { height: 18px; line-height: 18px; }
.inf span { display: inline-block; width: 116px; }
.foot2 { display: flex; justify-content: flex-end; gap: 6px; margin-top: 5px; }
.foot2 .btn { width: 75px; }
.foot2 .big { width: 126px; }
```
FILE: charts.js
```js
const NS = 'http://www.w3.org/2000/svg';
function add(parent, tag, attrs, text) {
  const el = document.createElementNS(NS, tag);
  for (const k in attrs) el.setAttribute(k, attrs[k]);
  if (text !== undefined) el.textContent = text;
  parent.appendChild(el);
  return el;
}
function random(seed) {
  return () => {
    seed = (seed * 1664525 + 1013904223) % 4294967296;
    return seed / 4294967296;
  };
}
function interpolate(points, x) {
  for (let i = 1; i < points.length; i++) {
    if (x <= points[i][0]) {
      const [x0, y0] = points[i - 1], [x1, y1] = points[i];
      return y0 + (y1 - y0) * (x - x0) / (x1 - x0);
    }
  }
  return points[points.length - 1][1];
}

const forward = [[0, .475], [.1, .46], [.25, .59], [.4, .65], [.5, .75], [.64, .9], [.8, .98], [.9, 1.03], [1, 1.09], [1.25, 1.18], [1.5, 1.29], [1.65, 1.35], [2, 1.47], [2.4, 1.56], [2.7, 1.63], [2.85, 1.6], [3, 1.68], [3.2, 1.67], [3.5, 1.74], [4, 1.76], [4.5, 1.77], [5, 1.81], [5.5, 1.8], [8, 1.79], [24, 1.78]];
const back = [[0, -.13], [.5, -.14], [1, -.13], [2, -.16], [2.5, -.18], [3, -.2], [4, -.23], [5, -.26], [8, -.28], [24, -.3]];
const series = [
  { color: '#ff0000', early: -.05, late: -.03, up: [[21.3, 1.55]], spikes: [[2.62, -.01], [3.82, -.49], [4.05, -.03]] },
  { color: '#008000', early: -.09, late: .01, up: [[20.5, 2], [23.2, 2.03]], spikes: [[.77, .02], [1.53, -.37], [2.68, -.39], [3.7, -.04]] },
  { color: '#0000ff', early: 0, late: .03, up: [[20, 2], [22.8, 1.96]], spikes: [[4.2, -.55], [1.35, -.04]] },
  { color: '#800000', early: .07, late: .02, up: [[.38, .9], [.77, 1.24], [3.5, 1.88], [21.1, 1.97]], spikes: [[1.2, -.03], [3.23, -.08], [4.04, -.36]] },
  { color: '#00ffff', early: .01, late: -.11, up: [[1.5, 1.08], [4.72, 2], [4.53, 1.6]], spikes: [[2.06, .12], [5, -.05]] },
  { color: '#ff00ff', early: -.04, late: .01, up: [[4.54, 1.97], [21.9, 1.53]], spikes: [[2.4, -.03], [3.73, -.43], [5.2, -.06]] },
  { color: '#808000', early: .06, late: 0, up: [[.8, 1.2], [1.2, 1.47], [1.53, 1.5], [1.88, 1.65], [2.23, 1.71], [2.9, 1.84], [5.3, 2.05]], spikes: [[.85, -.34], [4.47, -.41]] },
  { color: '#000080', early: .01, late: .06, up: [[20.6, 2], [22, 2.01], [22.5, 2]], spikes: [[.02, .06], [3.93, -.55]] }
];

function drawPlot() {
  const svg = document.getElementById('plot');
  svg.replaceChildren();
  const W = svg.clientWidth, H = svg.clientHeight;
  const left = 83, right = W - 38, top = 28, bottom = H - 113;
  const unitX = (right - 3 - left - 2) / 24, unitY = (bottom - top - 5) / 2.7;
  const X = v => left + 2 + v * unitX;
  const Y = v => bottom - (v + .6) * unitY;
  const grid = add(svg, 'g', { stroke: '#808080', 'stroke-dasharray': '5 4', fill: 'none', 'shape-rendering': 'crispEdges' });
  const ticks = add(svg, 'g', { stroke: '#808080', 'shape-rendering': 'crispEdges' });
  for (let i = -6; i <= 21; i++) {
    const y = Math.round(Y(i / 10)) + .5;
    add(grid, 'path', { d: `M${left} ${y}H${right}` });
    add(ticks, 'path', { d: `M${left - 5} ${y}h4` });
    if (i < 21) for (let m = 1; m < 4; m++) add(ticks, 'path', { d: `M${left - 3} ${Math.round(y - m * unitY / 40)}h2` });
    if (i > -6 && i < 21) add(svg, 'text', { x: left - 9, y: y + 4, 'text-anchor': 'end' }, String(i / 10).replace('.', ','));
  }
  for (let i = 0; i <= 24; i++) {
    const x = Math.round(X(i)) + .5;
    add(grid, 'path', { d: `M${x} ${top}V${bottom}` });
    for (let m = 0; m < 4; m++) add(ticks, 'path', { d: `M${Math.round(x + m * unitX / 4)} ${bottom + 1}v${m ? 3 : 5}` });
    add(svg, 'text', { x: x - 1, y: bottom + 18, 'text-anchor': 'middle' }, i);
  }
  add(svg, 'path', { d: `M${left - 1} ${top}V${bottom}H${right}`, stroke: '#000', 'stroke-width': 2, fill: 'none', 'shape-rendering': 'crispEdges' });
  add(svg, 'path', { d: `M${left - 1} ${top + .5}H${right + .5}V${bottom}M${left} ${Math.round(Y(0)) + .5}H${right}`, stroke: '#000', fill: 'none', 'shape-rendering': 'crispEdges' });
  add(svg, 'text', { transform: `translate(49 ${Math.round((top + bottom) / 2)}) rotate(-90)`, 'text-anchor': 'middle' }, 'Drehmoment [Nm]');

  const step = .075;
  series.forEach((s, n) => {
    const rnd = random(977 * (n + 3));
    [forward, back].forEach((base, dir) => {
      const pts = [];
      let drift = 0;
      for (let x = 0; x < 23.85; x += step) {
        const blend = Math.min(1, x / 6);
        const bias = dir ? 0 : s.early * (1 - blend) + s.late * blend;
        drift = drift * .35 + (rnd() + rnd() - 1) * .13;
        let noise = drift;
        if (rnd() > .92) noise *= 2;
        let y = interpolate(base, x) + bias + noise;
        for (const [sx, sy] of dir ? s.spikes : s.up) if (Math.abs(sx - x) <= step / 2) y = sy;
        pts.push(`${X(x).toFixed(1)},${Y(y).toFixed(1)}`);
      }
      add(svg, 'polyline', { points: pts.join(' '), fill: 'none', stroke: s.color, 'shape-rendering': 'crispEdges' });
    });
  });
  const rnd = random(4242);
  [forward, back].forEach(base => {
    const pts = [];
    let drift = 0;
    for (let x = 0; x < 23.85; x += .075) {
      drift = drift * .4 + (rnd() + rnd() - 1) * (x < 2 && base === forward ? .02 : .055);
      pts.push([X(x), Y(interpolate(base, x) + drift)]);
    }
    add(svg, 'polyline', { points: pts.map(p => p.map(v => v.toFixed(1)).join()).join(' '), fill: 'none', stroke: '#000', 'stroke-width': 3 });
    add(svg, 'path', { d: pts.map(p => `M${Math.round(p[0]) - 3} ${Math.round(p[1]) - 3}h6v6h-6z`).join('') });
  });
  const end = Math.round(X(23.95));
  add(svg, 'path', { d: `M${end} ${Y(1.7)}V${bottom}`, stroke: '#ff00ff', 'shape-rendering': 'crispEdges' });
  add(svg, 'path', { d: `M${end - 2} ${Y(1.78)}V${bottom}`, stroke: '#000', 'stroke-width': 3, 'shape-rendering': 'crispEdges' });
  add(svg, 'path', { d: `M${end - 4} ${Y(1.26) - 2}h5v5h-5z` });

  const ly = H - 53, cell = 74, lx = 27, end2 = lx + 3 + cell * 9;
  add(svg, 'path', { d: `M${lx + 9} ${ly + 21}H${end2}`, stroke: '#b0b0b0' });
  add(svg, 'rect', { x: lx + .5, y: ly + .5, width: end2 - lx, height: 19, rx: 9, fill: '#fff', stroke: '#000' });
  [...series.map(s => s.color), '#000'].forEach((color, i) => {
    const x = lx + i * cell;
    if (i) add(svg, 'path', { d: `M${x + 2.5} ${ly}v20`, stroke: '#000' });
    add(svg, 'path', { d: `M${x + 6} ${ly + 9.5}h11`, stroke: color });
    add(svg, 'text', { x: x + 24, y: ly + 13 }, i < 8 ? 'KSS_C_ ' + (i + 1) : 'Ø_KSS_C');
  });
}

function drawBars() {
  const svg = document.getElementById('bars');
  const Y = v => 18 + (1.8 - v) / .05 * 25.67;
  add(svg, 'path', { d: 'M62 6H277V157H62z', fill: 'none', stroke: '#000' });
  add(svg, 'path', { d: 'M58 10l4-4v152l-4 4z', fill: '#ffff80', stroke: '#000', 'stroke-width': .8 });
  add(svg, 'path', { d: 'M58 162l4-4H277l-4 4z', fill: '#fff', stroke: '#000', 'stroke-width': .8 });
  add(svg, 'path', { d: 'M57.500 10v152', stroke: '#000', 'stroke-width': 2 });
  for (let i = 0; i < 6; i++) {
    const v = 1.55 + i * .05, y = Math.round(Y(v)) + .5;
    add(svg, 'path', { d: `M54 ${y}h4l4-4`, stroke: '#808080', fill: 'none' });
    add(svg, 'path', { d: `M62 ${y - 4}H276`, stroke: '#808080', 'stroke-dasharray': '4 3' });
    add(svg, 'text', { x: 50, y: y + 4, 'text-anchor': 'end' }, String(Math.round(v * 100) / 100).replace('.', ',') + ' Nm');
  }
  const bars = [[1.669, 48, 48], [1.676, 71, 28], [1.728, 93, 8], [1.74, 120, 24], [1.638, 140, 64], [1.69, 166, 44], [1.714, 186, 24], [1.755, 209, 4], [1.7, 237, 44]];
  bars.forEach(([v], i) => {
    const x = 65.5 + i * 23, y = Math.round(Y(v)) + .5, last = i === 8;
    add(svg, 'path', { d: `M${x} ${y}h18V162H${x}z`, fill: last ? '#ff0000' : '#5050ff' });
    add(svg, 'path', { d: `M${x} 162V${y}h18V162`, fill: 'none', stroke: '#000' });
    add(svg, 'path', { d: `M${x} ${y}l4-4h18l-4 4z`, fill: last ? '#c00000' : '#1010c0', stroke: '#000' });
    add(svg, 'path', { d: `M${x + 18} ${y}l4-4V158l-4 4z`, fill: last ? '#900000' : '#000090', stroke: '#000' });
  });
  const order = [0, 1, 2, 3, 5, 4, 6, 7, 8];
  order.forEach(i => {
    const [v, x, y] = bars[i], label = String(v).replace('.', ',') + ' Nm';
    const w = label.length === 8 ? 56 : label.length === 7 ? 50 : 44;
    add(svg, 'path', { d: `M${75.5 + i * 23} ${y + 15}V${Math.max(y + 16, Y(v) - 2)}`, stroke: '#fff' });
    add(svg, 'rect', { x: x + 3, y: y + 3, width: w, height: 15, fill: '#000', 'fill-opacity': .25 });
    add(svg, 'rect', { x: x + .5, y: y + .5, width: w - 1, height: 15, fill: '#ffffe0', stroke: '#000' });
    add(svg, 'text', { x: x + w / 2, y: y + 12, 'text-anchor': 'middle' }, label);
  });
}

drawPlot();
drawBars();
window.addEventListener('resize', drawPlot);
```
